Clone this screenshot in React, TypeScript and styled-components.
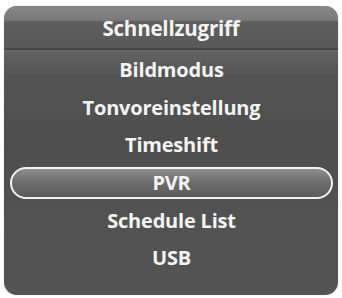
import React from 'react';
import styled, { createGlobalStyle } from 'styled-components';

const GlobalStyle = createGlobalStyle`
  html, body {
    margin: 0;
    padding: 0;
    background: #ffffff;
  }
`;

const Page = styled.div`
  width: 342px;
  height: 298px;
  padding: 6px 4px 3px 4px;
  box-sizing: border-box;
`;

const Panel = styled.div`
  height: 100%;
  border-radius: 13px;
  overflow: hidden;
  display: flex;
  flex-direction: column;
  background: linear-gradient(180deg, #8c8c8c 0px, #6c6c6c 30px, #545454 70px, #4e4e4e 140px, #535353 240px);
  box-shadow: 0 0 1px rgba(0, 0, 0, 0.4);
  font-family: "Open Sans", "Liberation Sans", sans-serif;
`;

const Header = styled.div`
  height: 45px;
  flex-shrink: 0;
  display: flex;
  align-items: center;
  justify-content: center;
  background: linear-gradient(180deg, #878787 0px, #7a7a7a 14px, #5e5e5e 16px, #595959 42px, #3e3e3e 43px, #3e3e3e 44px, #9a9a9a 45px);
  color: #f4f4f4;
  font-size: 20.5px;
  font-weight: 700;
  letter-spacing: -0.2px;
  padding-bottom: 2px;
  box-sizing: border-box;
`;

const List = styled.div`
  display: flex;
  flex-direction: column;
  padding: 0 5px 0 6px;
`;

const Item = styled.div<{ $selected?: boolean }>`
  display: flex;
  align-items: center;
  justify-content: center;
  color: #f4f4f4;
  font-size: 20px;
  font-weight: 700;
  letter-spacing: -0.2px;
  box-sizing: border-box;
  border-radius: 20px;
  border: 2px solid ${p => (p.$selected ? '#f2f2f2' : 'transparent')};
  background: ${p => (p.$selected ? 'linear-gradient(180deg, #8e8e8e 0%, #6e6e6e 45%, #5a5a5a 100%)' : 'transparent')};
  margin: ${p => (p.$selected ? '3px 0 2.6px' : '0')};
  height: ${p => (p.$selected ? '32px' : '37.6px')};
`;

const items = ['Bildmodus', 'Tonvoreinstellung', 'Timeshift', 'PVR', 'Schedule List', 'USB'];

export default function App() {
  return (
    <>
      <GlobalStyle />
      <Page>
        <Panel>
          <Header>Schnellzugriff</Header>
          <List>
            {items.map(label => (
              <Item key={label} $selected={label === 'PVR'}>
                {label}
              </Item>
            ))}
          </List>
        </Panel>
      </Page>
    </>
  );
}
